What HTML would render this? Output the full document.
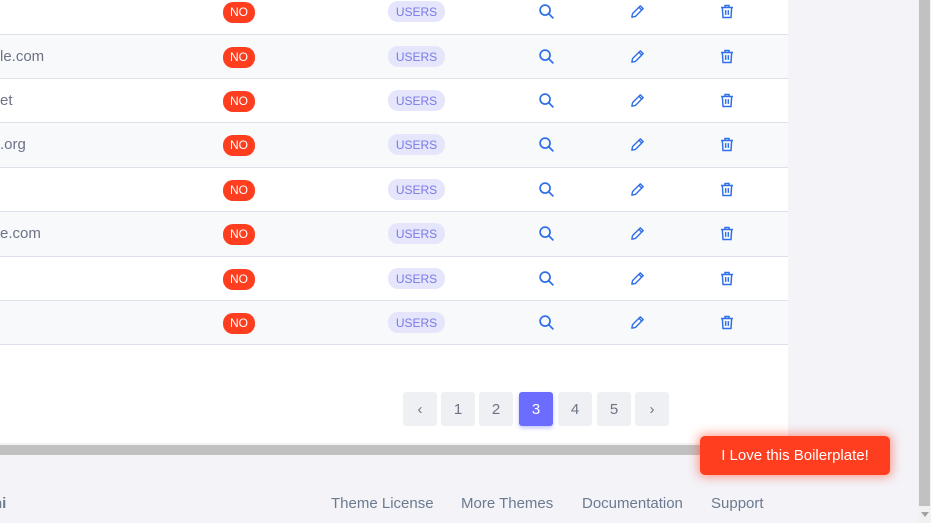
<!DOCTYPE html>
<html><head><style>
body{margin:0;width:931px;height:523px;overflow:hidden;background:#f3f3f8;font-family:"Liberation Sans",sans-serif;position:relative}
.card{position:absolute;left:0;top:0;width:788px;height:443px;background:#fff}
.row{position:absolute;left:0;width:788px;height:45px;box-sizing:border-box;border-top:1px solid #dde2ea}
.row.g{background:#f8f9fb}
.em{position:absolute;left:0;top:0;line-height:44px;font-size:15px;color:#6b7385}
.no{position:absolute;left:223px;top:12px;width:32px;height:21px;border-radius:10px;background:#ff3d1f;color:#fff;font-size:12px;line-height:21px;text-align:center}
.us{position:absolute;left:388px;top:11px;width:57px;height:21px;border-radius:10px;background:#e5e5fc;color:#7a7ae8;font-size:12px;line-height:22px;text-align:center}
.ic{position:absolute;top:13px}
.pg{position:absolute;top:392px;width:34px;height:34px;border-radius:3px;background:#eff0f3;color:#6b7385;font-size:15px;line-height:35px;text-align:center}
.hs{position:absolute;left:0;top:445px;width:780px;height:10px;background:#c1c1c1}
.vs{position:absolute;left:918px;top:0;width:13px;height:523px;background:#f1f1f1}
.vt{position:absolute;left:919px;top:0;width:11px;height:506px;background:#c1c1c1}
.btn{position:absolute;left:700px;top:436px;width:190px;height:39px;border-radius:5px;background:#ff3d1f;color:#fff;font-size:15px;line-height:39px;text-align:center;box-shadow:0 0 10px 2px rgba(255,61,31,.5)}
.ft{position:absolute;top:495px;font-size:15px;color:#6b7a90}
</style></head><body>
<div class="card"></div>
<div class="hs"></div>
<div class="pg" style="left:403px">‹</div><div class="pg" style="left:441px">1</div><div class="pg" style="left:479px">2</div><div class="pg" style="left:519px;background:#6c6cff;color:#fff;box-shadow:0 2px 4px rgba(108,108,255,.4)">3</div><div class="pg" style="left:558px">4</div><div class="pg" style="left:597px">5</div><div class="pg" style="left:635px">›</div>
<div class="ft" style="left:-7px;font-weight:bold">ni</div>
<div class="ft" style="left:331px">Theme License</div><div class="ft" style="left:461px">More Themes</div><div class="ft" style="left:582px">Documentation</div><div class="ft" style="left:711px">Support</div>
<div class="btn">I Love this Boilerplate!</div>
<div class="vs"></div><div class="vt"></div>
<div style="position:absolute;left:921px;top:512px;width:0;height:0;border-left:4px solid transparent;border-right:4px solid transparent;border-top:5px solid #a3a3a3"></div>
<script>
var em=["","le.com","et",".org","","e.com","",""];
var h="";
var tops=[-11,34,78,122,167,211,256,300];
for(var i=0;i<8;i++){
h+='<div class="row'+(i%2?' g':'')+'" style="top:'+tops[i]+'px'+(i==7?';border-bottom:1px solid #dde2ea':'')+'"><span class="em">'+em[i]+'</span><div class="no">NO</div><div class="us">USERS</div>'+
'<svg class="ic" style="left:538px" width="17" height="17" viewBox="0 0 24 24" fill="none" stroke="#2f6fe8" stroke-width="2.4" stroke-linecap="round"><circle cx="10" cy="10" r="7"/><path d="M15 15l6 6"/></svg>'+
'<svg class="ic" style="left:629px" width="17" height="17" viewBox="0 0 24 24" fill="none" stroke="#2f6fe8" stroke-width="2" stroke-linejoin="round"><path d="M4 20l1-5L16 4l4 4L9 19z M14 6l4 4"/></svg>'+
'<svg class="ic" style="left:719px" width="16" height="17" viewBox="0 0 24 24" fill="none" stroke="#2f6fe8" stroke-width="2.2"><path d="M3 6h18M9 6V3h6v3M5 6l1 15h12l1-15M10 10v7M14 10v7"/></svg></div>';
}
document.querySelector('.card').innerHTML=h;
</script>
</body></html>
